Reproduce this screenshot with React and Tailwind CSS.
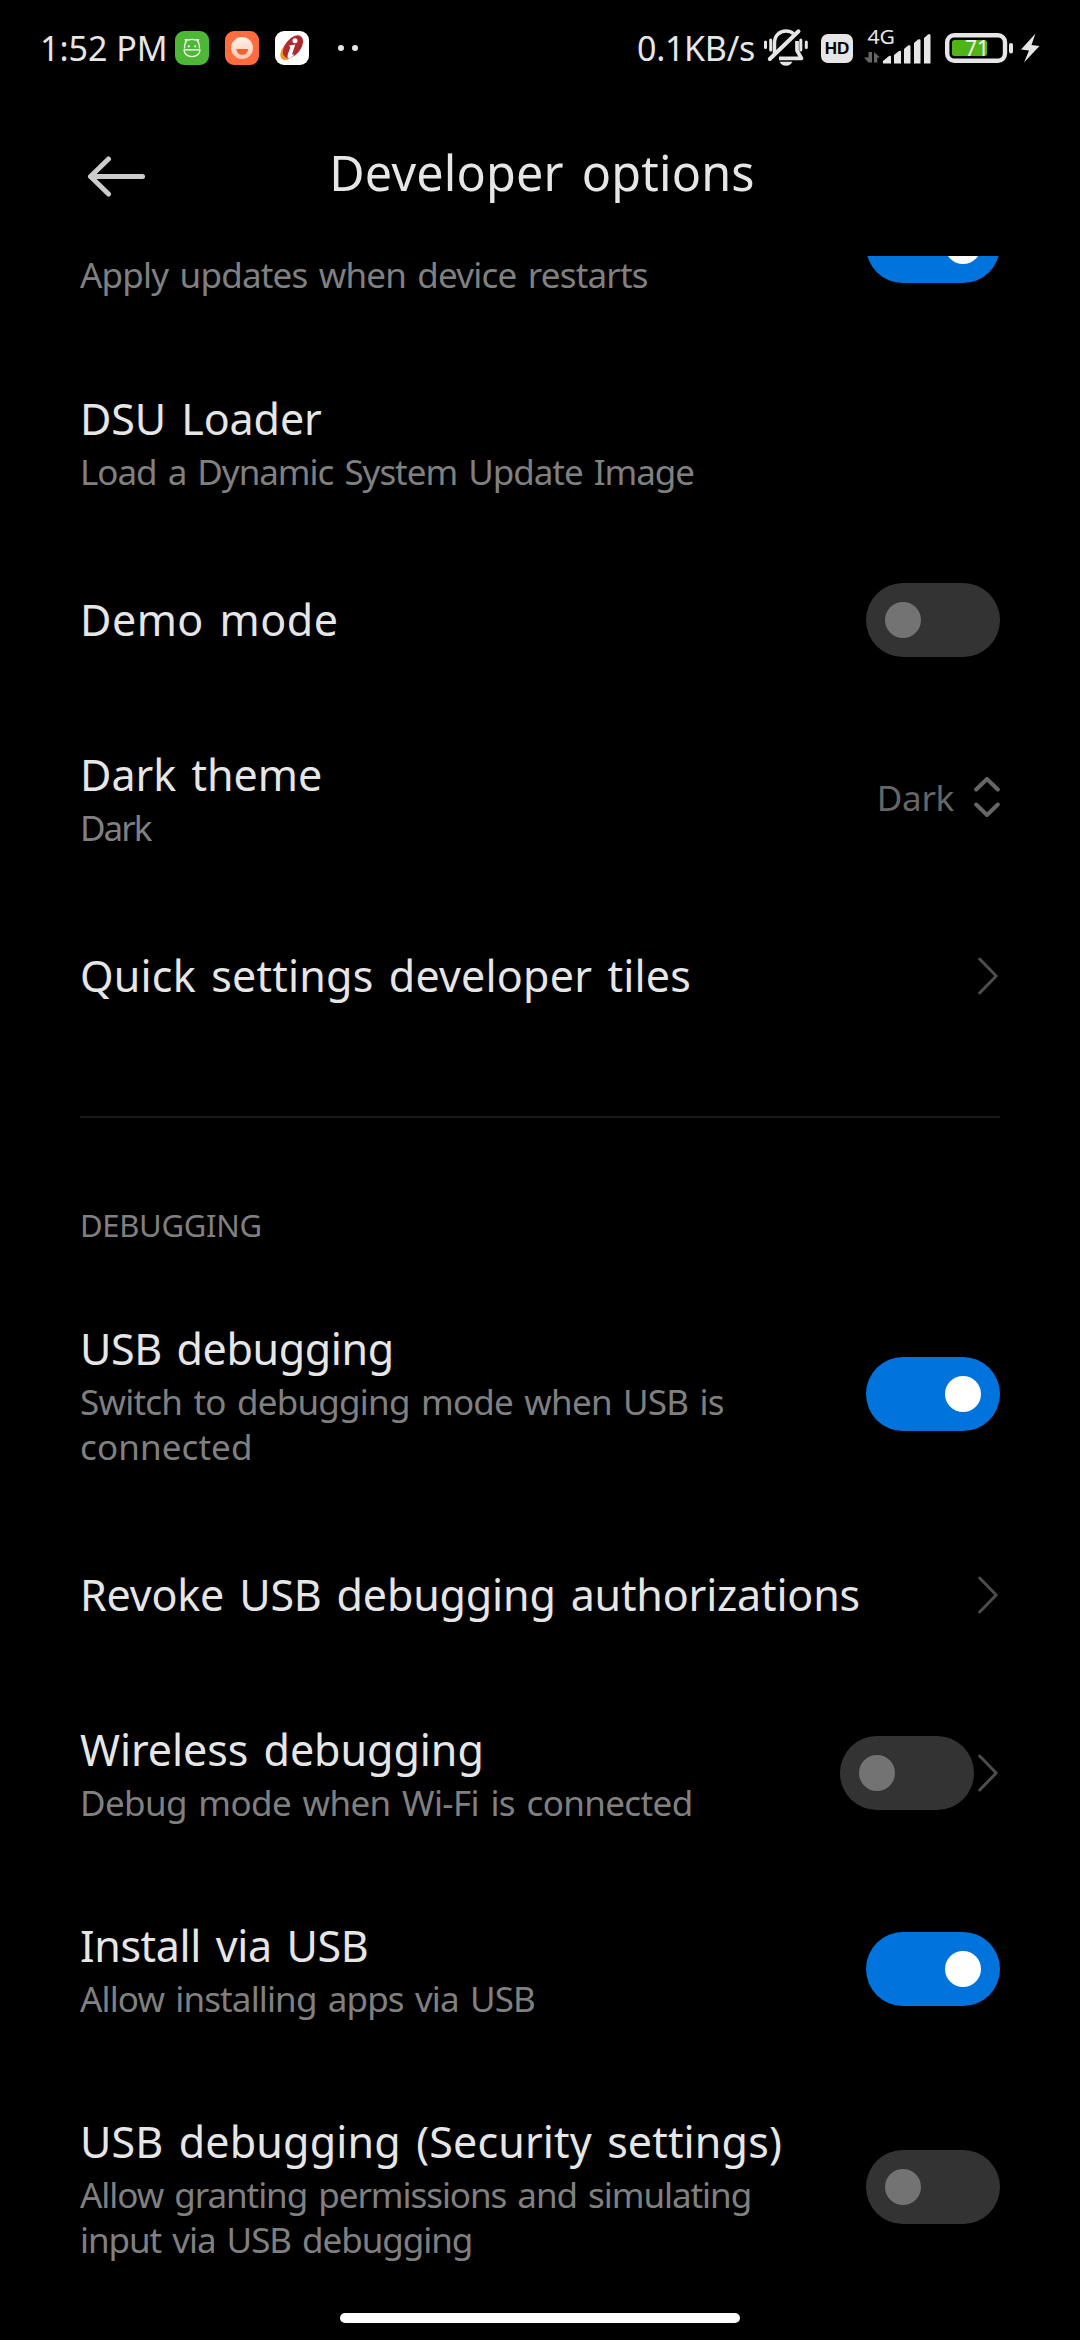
import React from "react";

function Toggle({ on }) {
  return (
    <div
      role="switch"
      aria-checked={on}
      className={
        on
          ? "flex h-[74px] w-[134px] shrink-0 items-center justify-end rounded-full bg-[#0073dd] px-[19px]"
          : "flex h-[74px] w-[134px] shrink-0 items-center justify-start rounded-full bg-[#333333] px-[19px]"
      }
    >
      <div className={on ? "h-9 w-9 rounded-full bg-white" : "h-9 w-9 rounded-full bg-[#737373]"} />
    </div>
  );
}

function Chevron() {
  return (
    <svg className="mr-0.5 h-[38px] w-5 shrink-0" viewBox="0 0 20 38" fill="none" stroke="#4d4d4d" strokeWidth="3" strokeLinecap="round" strokeLinejoin="round">
      <path d="M1.7 2 L18.2 19 L1.7 36" />
    </svg>
  );
}

function UpDown() {
  return (
    <svg className="ml-5 h-10 w-[26px] shrink-0" viewBox="0 0 26 40" fill="none" stroke="#666666" strokeWidth="4" strokeLinecap="round">
      <path d="M2.2 12.5 L13 2 L23.8 12.5" />
      <path d="M2.2 27.5 L13 38 L23.8 27.5" />
    </svg>
  );
}

function Row({ height, children, right, single }) {
  return (
    <div className={`flex shrink-0 items-center justify-between px-20 ${height}`}>
      <div className={single ? "" : "pb-0.5"}>{children}</div>
      <div className="flex items-center">{right}</div>
    </div>
  );
}

function Title({ spacing = "", children }) {
  return <div className={`text-[43px] leading-[60px] [word-spacing:4px] whitespace-nowrap text-[#e6e6e6] ${spacing}`}>{children}</div>;
}

function Sub({ spacing = "", children }) {
  return <div className={`text-[35px] leading-[45px] [word-spacing:3px] whitespace-nowrap text-[#808080] ${spacing}`}>{children}</div>;
}

function AndroidAppIcon() {
  return (
    <svg className="h-[34px] w-[34px]" viewBox="0 0 34 34" fill="none">
      <rect width="34" height="34" rx="9" fill="#4cb836" />
      <path d="M9.5 17.5 C9.5 13.5 10.3 11.6 11.2 10.8 L10.3 8.6 L13.4 9 C15.5 8.3 18.7 8.3 20.6 9 L23.6 8.6 L22.8 10.8 C23.8 11.8 24.5 13.5 24.5 17.5" stroke="#fff" strokeWidth="1.3" strokeLinejoin="round" />
      <path d="M9 18.8 H25 C25 23 21.5 25.7 17 25.7 C12.5 25.7 9 23 9 18.8 Z" stroke="#fff" strokeWidth="1.3" strokeLinejoin="round" />
      <circle cx="13.8" cy="15.3" r="1.1" fill="#fff" />
      <circle cx="20.2" cy="15.3" r="1.1" fill="#fff" />
    </svg>
  );
}

function SmileAppIcon() {
  return (
    <svg className="ml-4 h-[34px] w-[34px]" viewBox="0 0 34 34">
      <defs>
        <linearGradient id="face" x1="0" y1="0" x2="0" y2="1">
          <stop offset="0" stopColor="#fff1ea" />
          <stop offset="1" stopColor="#ffc9b2" />
        </linearGradient>
      </defs>
      <rect width="34" height="34" rx="9" fill="#ff6d3f" />
      <circle cx="17" cy="17" r="11" fill="url(#face)" />
      <path d="M11.5 18 H23 C23 21.5 20.5 23.8 17.25 23.8 C14 23.8 11.5 21.5 11.5 18 Z" fill="#f2622f" />
    </svg>
  );
}

function BankAppIcon() {
  return (
    <svg className="ml-4 h-[34px] w-[34px]" viewBox="0 0 34 34">
      <rect width="34" height="34" rx="9" fill="#fff" />
      <ellipse cx="15" cy="18.5" rx="12.5" ry="7" transform="rotate(-50 15 18.5)" fill="#f7941d" />
      <ellipse cx="18" cy="15.7" rx="13" ry="7.8" transform="rotate(-52 18 15.7)" fill="#b02a30" />
      <circle cx="20" cy="9.8" r="2.5" fill="#fff" />
      <path d="M13.8 14.8 L20.3 13.4 L17.3 22.5 C17 24 18 24 19.5 22.8 C18.2 25.5 15.5 28 13.3 27 C11.5 26 13.3 22.5 15.3 16.3 Z" fill="#fff" />
    </svg>
  );
}

function MutedBell() {
  return (
    <svg className="h-10 w-11" viewBox="0 0 44 40" fill="none" stroke="#e6e6e6">
      <g strokeWidth="3" strokeLinecap="round">
        <path d="M1.5 14 V19.5" />
        <path d="M6.7 12 V22" />
        <path d="M36.8 12 V22" />
        <path d="M42.3 14 V19.5" />
      </g>
      <path d="M10.5 26.5 V15 C10.5 7.5 15.5 3 22 3 C25 3 27.5 4 29.5 5.8" strokeWidth="3.5" />
      <path d="M33 13 V22.5 L37.5 30.3 H15" strokeWidth="3.7" strokeLinejoin="round" />
      <path d="M5.8 31 L34.5 3.3" strokeWidth="4" strokeLinecap="round" />
      <path d="M15.5 33.8 H28.5 C27 36.5 25 37.8 22 37.8 C19 37.8 17 36.5 15.5 33.8 Z" fill="#e6e6e6" stroke="none" />
    </svg>
  );
}

function Signal() {
  return (
    <svg className="ml-[9px] h-10 w-[70px] overflow-visible" viewBox="0 0 70 40" fill="#e6e6e6">
      <text x="5.5" y="16" fontSize="20" className="font-['Noto_Sans']" textLength="27.5" lengthAdjust="spacingAndGlyphs">4G</text>
      <g fill="#666666">
        <path d="M6.5 24 V34.5 H10 V24 Z M6.5 34.5 L2 29.5 H6.5 Z" />
        <path d="M12 34.5 V24 L18 29.5 H15.3 V34.5 Z" />
      </g>
      <path d="M21 33 L27 28 Q29 27 29 29 V35.5 H21.5 Q21 35.5 21 35 Z" />
      <path d="M32 27 L37 23 Q39 22 39 24 V35.5 H32 Z" />
      <path d="M42 21 L46 17.5 Q48.5 16.5 48.5 18.5 V35.5 H42 Z" />
      <path d="M52 15 L56 11.5 Q58.5 10.5 58.5 12.5 V35.5 H52 Z" />
      <path d="M62 10 L66 6.5 Q68.5 5 68.5 7.5 V35.5 H62 Z" />
    </svg>
  );
}

function Battery() {
  return (
    <svg className="ml-3 h-10 w-[70px]" viewBox="0 0 70 40">
      <rect x="3.2" y="7.2" width="57.8" height="25.6" rx="7" fill="none" stroke="#e6e6e6" strokeWidth="4.4" />
      <rect x="8" y="12" width="35" height="16" rx="2.5" fill="#4fb416" />
      <text x="21" y="28" fontSize="22" fill="#f2f2f2" className="font-['Noto_Sans']" textLength="24" lengthAdjust="spacingAndGlyphs">71</text>
      <rect x="65" y="15" width="4" height="10.5" rx="2" fill="#e6e6e6" />
    </svg>
  );
}

function StatusBar() {
  return (
    <div className="flex h-24 shrink-0 items-center justify-between pr-10 pl-10 text-[34px] leading-[46px] whitespace-nowrap text-[#e6e6e6]">
      <div className="flex items-center">
        <div className="w-[135px]">1:52 PM</div>
        <AndroidAppIcon />
        <SmileAppIcon />
        <BankAppIcon />
        <div className="ml-[29px] flex gap-2">
          <div className="h-1.5 w-1.5 rounded-full bg-[#e6e6e6]" />
          <div className="h-1.5 w-1.5 rounded-full bg-[#e6e6e6]" />
        </div>
      </div>
      <div className="flex items-center">
        <div className="w-[127px] tracking-[-0.3px]">0.1KB/s</div>
        <MutedBell />
        <div className="ml-[13px] flex h-[29px] w-8 items-center justify-center rounded-[7px] bg-[#e6e6e6] font-['Liberation_Sans'] text-[17px] leading-none font-bold text-black">
          HD
        </div>
        <Signal />
        <Battery />
        <svg className="ml-1.5 h-[30px] w-5" viewBox="0 0 20 30" fill="#e6e6e6">
          <path d="M15.5 0.5 L1 16.5 L9 17.5 L4 29.5 L19.5 13 L11.5 12 Z" />
        </svg>
      </div>
    </div>
  );
}

function Header() {
  return (
    <div className="flex h-40 shrink-0 items-start justify-between px-[87px] pt-[42px]">
      <svg className="mt-[17px] h-11 w-[60px]" viewBox="0 0 60 44" fill="none" stroke="#cccccc" strokeWidth="5" strokeLinecap="round" strokeLinejoin="round">
        <path d="M55.5 21.5 H4" />
        <path d="M21.5 4 L3.5 21.5 L21.5 39" />
      </svg>
      <div className="text-[48.5px] leading-[68px] tracking-[0.2px] [word-spacing:5px] whitespace-nowrap text-[#e6e6e6]">Developer options</div>
      <div className="w-[56px]" />
    </div>
  );
}

export default function App() {
  return (
    <div className="flex h-[2340px] w-[1080px] flex-col overflow-hidden bg-black font-['Noto_Sans',sans-serif]">
      <StatusBar />
      <Header />
      <div className="flex min-h-0 flex-1 flex-col overflow-hidden">
        <div className="flex h-[88px] shrink-0 justify-between px-20">
          <div className="-mt-1">
            <Sub spacing="tracking-[-0.8px]">Apply updates when device restarts</Sub>
          </div>
          <div className="-mt-[47px]">
            <Toggle on />
          </div>
        </div>
        <Row height="h-[196px]">
          <Title spacing="tracking-[-0.1px]">DSU Loader</Title>
          <Sub spacing="tracking-[-1.03px]">Load a Dynamic System Update Image</Sub>
        </Row>
        <Row height="h-40" single right={<Toggle on={false} />}>
          <Title spacing="tracking-[0.5px]">Demo mode</Title>
        </Row>
        <Row
          height="h-[196px]"
          right={
            <div className="mb-0.5 flex items-center">
              <span className="text-[35px] leading-[45px] tracking-[-0.3px] text-[#666666]">Dark</span>
              <UpDown />
            </div>
          }
        >
          <Title>Dark theme</Title>
          <Sub spacing="tracking-[-2px]">Dark</Sub>
        </Row>
        <Row height="h-40" single right={<Chevron />}>
          <Title spacing="tracking-[0.2px]">Quick settings developer tiles</Title>
        </Row>
        <div className="mx-20 mt-[60px] h-0.5 shrink-0 bg-[#1a1a1a]" />
        <div className="h-[156px] shrink-0 px-20 pt-[87px] text-[31px] leading-[40px] tracking-[-0.3px] text-[#808080]">DEBUGGING</div>
        <Row
          height="h-[241px]"
          right={
            <div className="mb-px">
              <Toggle on />
            </div>
          }
        >
          <Title spacing="tracking-[-0.4px]">USB debugging</Title>
          <Sub spacing="tracking-[-0.78px]">
            Switch to debugging mode when USB is
            <br />
            <span className="tracking-[0.1px]">connected</span>
          </Sub>
        </Row>
        <Row height="h-40" single right={<Chevron />}>
          <Title spacing="tracking-[-0.18px]">Revoke USB debugging authorizations</Title>
        </Row>
        <Row
          height="h-[196px]"
          right={
            <>
              <div className="mr-1">
                <Toggle on={false} />
              </div>
              <Chevron />
            </>
          }
        >
          <Title spacing="tracking-[-0.05px]">Wireless debugging</Title>
          <Sub spacing="tracking-[-0.62px]">Debug mode when Wi-Fi is connected</Sub>
        </Row>
        <Row height="h-[196px]" right={<Toggle on />}>
          <Title spacing="tracking-[-0.38px]">Install via USB</Title>
          <Sub spacing="tracking-[-0.87px]">Allow installing apps via USB</Sub>
        </Row>
        <Row
          height="h-[241px]"
          right={
            <div className="mb-px">
              <Toggle on={false} />
            </div>
          }
        >
          <Title spacing="tracking-[0.15px]">USB debugging (Security settings)</Title>
          <Sub spacing="tracking-[-1.05px]">
            Allow granting permissions and simulating
            <br />
            input via USB debugging
          </Sub>
        </Row>
        <div className="mx-auto mt-[5px] h-2.5 w-[400px] shrink-0 rounded-full bg-white" />
      </div>
    </div>
  );
}
